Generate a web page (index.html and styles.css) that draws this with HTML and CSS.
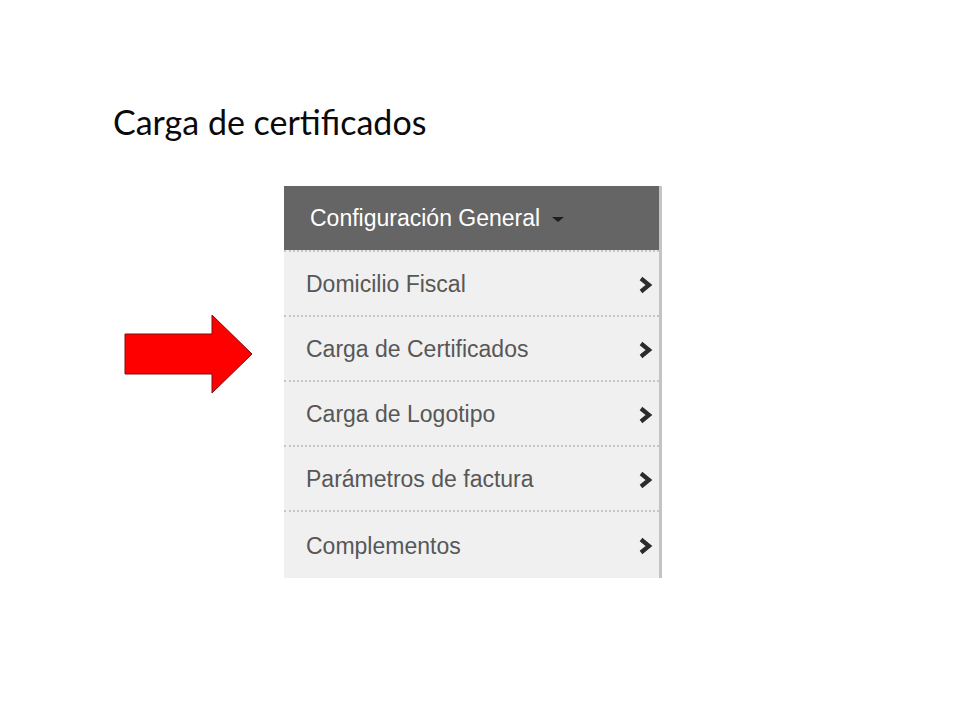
FILE: index.html
```html
<!DOCTYPE html>
<html lang="es">

    <head>
        <meta charset="UTF-8">
        <meta name="viewport" content="width=device-width, initial-scale=1.0">
        <title>Carga de certificados</title>
        <link rel="stylesheet" href="styles.css">
    </head>

    <body>
        <h1 class="title">Carga de certificados</h1>

        <div class="stage">
            <svg class="arrow" width="130" height="81" viewBox="0 0 130 81">
                <polygon points="1,20 88,20 88,1 128,40 88,79 88,60 1,60" fill="#ff0000" stroke="#7a1010" stroke-width="1"/>
            </svg>

            <div class="menu">
                <div class="menu-head">
                    Configuración General <span class="caret"></span>
                </div>
                <ul class="menu-list">
                    <li class="menu-item">
                        <span>Domicilio Fiscal</span>
                        <svg class="chevron" width="18" height="18" viewBox="0 0 18 18"><path d="M5 2.5 L13 9 L5 15.5" fill="none" stroke="#2b2b2b" stroke-width="4.2"/></svg>
                    </li>
                    <li class="menu-item">
                        <span>Carga de Certificados</span>
                        <svg class="chevron" width="18" height="18" viewBox="0 0 18 18"><path d="M5 2.5 L13 9 L5 15.5" fill="none" stroke="#2b2b2b" stroke-width="4.2"/></svg>
                    </li>
                    <li class="menu-item">
                        <span>Carga de Logotipo</span>
                        <svg class="chevron" width="18" height="18" viewBox="0 0 18 18"><path d="M5 2.5 L13 9 L5 15.5" fill="none" stroke="#2b2b2b" stroke-width="4.2"/></svg>
                    </li>
                    <li class="menu-item">
                        <span>Parámetros de factura</span>
                        <svg class="chevron" width="18" height="18" viewBox="0 0 18 18"><path d="M5 2.5 L13 9 L5 15.5" fill="none" stroke="#2b2b2b" stroke-width="4.2"/></svg>
                    </li>
                    <li class="menu-item last">
                        <span>Complementos</span>
                        <svg class="chevron" width="18" height="18" viewBox="0 0 18 18"><path d="M5 2.5 L13 9 L5 15.5" fill="none" stroke="#2b2b2b" stroke-width="4.2"/></svg>
                    </li>
                </ul>
            </div>
        </div>
    </body>

</html>
```

FILE: styles.css
```css
html {
    height: 100%;
}

body {
    margin: 0px;
    background: #ffffff;
    font-family: "Liberation Sans", Arial, sans-serif;
    color: #000000;
}

body * {
    box-sizing: border-box;
}

.title {
    margin: 0px;
    padding: 102px 0px 0px 113px;
    font-family: Lato, "Open Sans", sans-serif;
    font-weight: normal;
    font-size: 34px;
    line-height: 40px;
    color: #0a0a0a;
}

.stage {
    display: flex;
    align-items: flex-start;
    margin-top: 44px;
}

.arrow {
    display: block;
    flex-shrink: 0;
    margin: 128px 30px 0px 124px;
}

.menu {
    width: 378px;
    background: #f0f0f0;
    border-right: 3px solid #c4c4c4;
}

.menu-head {
    display: flex;
    align-items: center;
    height: 64px;
    padding-left: 26px;
    background: #656565;
    color: #ffffff;
    font-size: 23px;
}

.caret {
    display: inline-block;
    margin-left: 12px;
    margin-top: 2px;
    border-left: 6px solid transparent;
    border-right: 6px solid transparent;
    border-top: 5px solid #1e1e1e;
}

.menu-list {
    list-style: none;
    margin: 0px;
    padding: 0px;
}

.menu-item {
    display: flex;
    align-items: center;
    justify-content: space-between;
    height: 65px;
    padding: 2px 5px 0px 22px;
    border-top: 2px dotted #c6c6c6;
    font-size: 23px;
    color: #575757;
}

.menu-item.last {
    height: 68px;
}

.chevron {
    display: block;
}
```
